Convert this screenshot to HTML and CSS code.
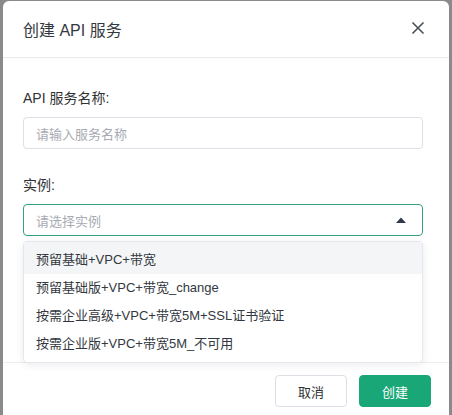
FILE: index.html
```html
<!DOCTYPE html>
<html lang="zh">
<head>
<meta charset="utf-8">
<link rel="stylesheet" href="styles.css">
</head>
<body>
<div class="modal">
  <div class="modal-header">
    <span class="modal-title">创建 API 服务</span>
    <svg class="close" width="14" height="14" viewBox="0 0 14 14"><path d="M1.5 1.5 L12.5 12.5 M12.5 1.5 L1.5 12.5" stroke="#4a4f57" stroke-width="1.6" fill="none"/></svg>
  </div>
  <div class="modal-body">
    <div class="form-item">
      <div class="label">API 服务名称:</div>
      <div class="input"><span class="placeholder">请输入服务名称</span></div>
    </div>
    <div class="form-item second">
      <div class="label">实例:</div>
      <div class="select-wrap">
        <div class="input select">
          <span class="placeholder">请选择实例</span>
          <svg class="caret" width="10" height="6" viewBox="0 0 10 6"><path d="M0 6 L5 0.5 L10 6 Z" fill="#2f3a48"/></svg>
        </div>
        <ul class="dropdown">
          <li class="active">预留基础+VPC+带宽</li>
          <li>预留基础版+VPC+带宽_change</li>
          <li>按需企业高级+VPC+带宽5M+SSL证书验证</li>
          <li>按需企业版+VPC+带宽5M_不可用</li>
        </ul>
      </div>
    </div>
  </div>
  <div class="modal-footer">
    <button class="btn">取消</button>
    <button class="btn primary">创建</button>
  </div>
</div>
</body>
</html>
```
FILE: styles.css
```css
html, body {
  margin: 0;
  padding: 0;
  height: 100%;
  overflow: hidden;
}
body {
  background: #8a8a8a;
  font-family: "Liberation Sans", "Noto Sans CJK SC", sans-serif;
  color: #303133;
}
.modal {
  margin: 1px 0 0 3px;
  width: 446px;
  height: 414px;
  background: #fff;
  border-radius: 6px 6px 0 0;
  box-sizing: border-box;
}
.modal-header {
  height: 56px;
  border-bottom: 1px solid #e9ebef;
  display: flex;
  align-items: center;
  justify-content: space-between;
  padding: 0 20px 0 20px;
}
.modal-title {
  font-size: 16px;
  color: #34383f;
  margin-top: -1px;
}
.close {
  display: block;
  margin-right: 4px;
  margin-top: -2px;
}
.modal-body {
  padding: 30px 26px 0 20px;
  height: 305px;
  box-sizing: border-box;
  border-bottom: 1px solid #eceef1;
}
.label {
  font-size: 14px;
  line-height: 20px;
  height: 20px;
  color: #303133;
  margin-bottom: 9px;
}
.form-item.second {
  margin-top: 26px;
}
.input {
  height: 32px;
  box-sizing: border-box;
  border: 1px solid #dcdfe6;
  border-radius: 4px;
  padding: 0 12px;
  display: flex;
  align-items: center;
  justify-content: space-between;
}
.placeholder {
  font-size: 13px;
  color: #a8abb2;
}
.select {
  border-color: #3a9f80;
}
.caret {
  display: block;
  margin-right: 4px;
}
.select-wrap {
  position: relative;
}
.dropdown {
  position: absolute;
  top: 37px;
  left: 0;
  right: 0;
  margin: 0;
  padding: 4px 0;
  list-style: none;
  background: #fff;
  border: 1px solid #e4e7ed;
  border-radius: 4px;
  box-shadow: 0 2px 8px rgba(0, 0, 0, 0.08);
  z-index: 2;
}
.dropdown li {
  height: 28px;
  line-height: 28px;
  padding: 0 12px;
  font-size: 13px;
  color: #333840;
}
.dropdown li.active {
  background: #f4f5f7;
  margin-top: -4px;
  padding-top: 4px;
}
.modal-footer {
  display: flex;
  justify-content: flex-end;
  gap: 12px;
  padding: 12px 18px 0 0;
}
.btn {
  width: 72px;
  height: 32px;
  border: 1px solid #dcdfe6;
  border-radius: 4px;
  background: #fff;
  font-family: "Liberation Sans", "Noto Sans CJK SC", sans-serif;
  font-size: 13px;
  color: #303133;
  padding: 0;
}
.btn.primary {
  background: #19a777;
  border-color: #19a777;
  color: #fff;
}
```
